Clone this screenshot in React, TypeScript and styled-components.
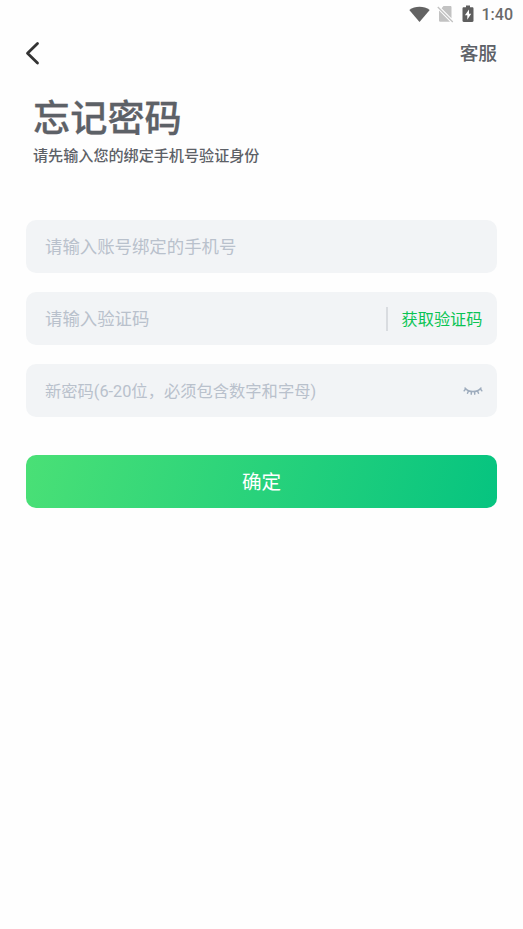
import React from "react";
import styled, { createGlobalStyle } from "styled-components";

const GlobalStyle = createGlobalStyle`
  * { box-sizing: border-box; }
  body {
    margin: 0;
    background: #fff;
    font-family: Roboto, "Noto Sans CJK SC", sans-serif;
    color: #5d6167;
  }
`;

const Screen = styled.div`
  display: flex;
  flex-direction: column;
  width: 523px;
  height: 929px;
  background: #fefefe;
`;

const StatusBar = styled.div`
  display: flex;
  align-items: center;
  justify-content: flex-end;
  height: 28px;
  padding-right: 10px;
`;

const StatusIcons = styled.div`
  display: flex;
  align-items: center;
  gap: 7.5px;
`;

const Clock = styled.span`
  margin-left: 8px;
  font: 500 16px/28px Roboto, sans-serif;
  color: #6a6a6a;
  padding-top: 1px;
`;

const NavBar = styled.header`
  display: flex;
  align-items: center;
  justify-content: space-between;
  height: 50px;
  padding: 0 26px 0 25px;
`;

const IconButton = styled.button`
  display: flex;
  padding: 0;
  border: 0;
  background: none;
`;

const NavLink = styled.a`
  padding-top: 2px;
  font-size: 18.7px;
  font-weight: 500;
  line-height: 28px;
`;

const Heading = styled.div`
  height: 142px;
  padding: 15px 33px 0;
`;

const Title = styled.h1`
  margin: 0;
  font-size: 37.2px;
  font-weight: 500;
  line-height: 52px;
  -webkit-text-stroke: 0.3px currentColor;
`;

const Subtitle = styled.p`
  margin: 0;
  font-size: 15.1px;
  font-weight: 500;
  line-height: 22px;
`;

const Form = styled.form`
  display: flex;
  flex-direction: column;
  gap: 18.7px;
  padding: 0 26px;
`;

const Field = styled.div`
  display: flex;
  align-items: center;
  height: 53.3px;
  padding: 0 14.5px 0 19px;
  border-radius: 10px;
  background: #f2f4f6;
`;

const Input = styled.input<{ $size: number }>`
  flex: 1;
  min-width: 0;
  height: 100%;
  padding: 1px 0 0;
  border: 0;
  outline: 0;
  background: none;
  font-family: inherit;
  font-size: ${(p) => p.$size}px;
  color: #5d6167;
  &::placeholder {
    color: #b9c1cc;
    opacity: 1;
  }
`;

const Divider = styled.span`
  width: 2px;
  height: 24px;
  margin-right: 14px;
  background: #d9dce0;
`;

const CodeButton = styled.button`
  padding: 2px 0 0;
  border: 0;
  background: none;
  font-family: inherit;
  font-size: 16.2px;
  line-height: 24px;
  color: #0bc454;
`;

const Submit = styled.button`
  height: 53.3px;
  margin-top: 18.7px;
  padding: 0 0 2px;
  border: 0;
  border-radius: 10px;
  background: linear-gradient(105deg, #4ae076 0%, #06c480 100%);
  font-family: inherit;
  font-size: 19.6px;
  color: #fff;
`;

const Wifi = () => (
  <svg width="21" height="17" viewBox="0 0 21 17">
    <path d="M.3 4C6-.4 15-.4 20.7 4L10.5 16Z" fill="#626262" />
  </svg>
);

const NoSim = () => (
  <svg width="17" height="18" viewBox="0 0 17 18">
    <path d="M6.500 1h6.700c.8 0 1.300.5 1.300 1.300v11L4.600 3.200Z" fill="#c2c2c2" />
    <path d="M2 5.500 13 16.800H3.500c-.8 0-1.500-.5-1.500-1.300Z" fill="#c2c2c2" />
    <path d="M.8 2 15.800 17" stroke="#c2c2c2" strokeWidth="1.300" />
  </svg>
);

const Battery = () => (
  <svg width="12" height="18" viewBox="0 0 12 18">
    <path d="M4 .5h4v1.800h2.300c.7 0 1.200.5 1.200 1.200v12.300c0 .7-.5 1.200-1.200 1.200H1.700c-.7 0-1.200-.5-1.200-1.200V3.500c0-.7.5-1.200 1.200-1.200H4Z" fill="#5e5e5e" />
    <path d="M7 4.600 2.900 10.300h2.400v4.400l3.900-5.900H7Z" fill="#fff" />
  </svg>
);

export default function App() {
  return (
    <>
      <GlobalStyle />
      <Screen>
        <StatusBar>
          <StatusIcons>
            <Wifi />
            <NoSim />
            <Battery />
          </StatusIcons>
          <Clock>1:40</Clock>
        </StatusBar>
        <NavBar>
          <IconButton aria-label="返回">
            <svg width="16" height="24" viewBox="0 0 16 24" fill="none">
              <path d="M12.500 2.500 2.500 12.300 12.500 22" stroke="#333" strokeWidth="2.800" strokeLinecap="round" strokeLinejoin="round" />
            </svg>
          </IconButton>
          <NavLink>客服</NavLink>
        </NavBar>
        <Heading>
          <Title>忘记密码</Title>
          <Subtitle>请先输入您的绑定手机号验证身份</Subtitle>
        </Heading>
        <Form onSubmit={(e) => e.preventDefault()}>
          <Field>
            <Input $size={17.4} placeholder="请输入账号绑定的手机号" />
          </Field>
          <Field>
            <Input $size={17.4} placeholder="请输入验证码" />
            <Divider />
            <CodeButton type="button">获取验证码</CodeButton>
          </Field>
          <Field>
            <Input $size={16.3} type="password" placeholder="新密码(6-20位，必须包含数字和字母)" />
            <IconButton type="button" aria-label="显示密码">
              <svg width="20" height="10" viewBox="0 0 20 10" fill="none" stroke="#9eacbd" strokeWidth="1.500" strokeLinecap="round">
                <path d="M2 2C6 6.800 14 6.800 18 2M2.700 2.900 1.200 4.800M5.500 4.900 4.500 7.300M8.500 5.600 8.200 8.200M11.500 5.600 11.800 8.200M14.500 4.900 15.500 7.300M17.300 2.900 18.800 4.800" />
              </svg>
            </IconButton>
          </Field>
          <Submit>确定</Submit>
        </Form>
      </Screen>
    </>
  );
}
